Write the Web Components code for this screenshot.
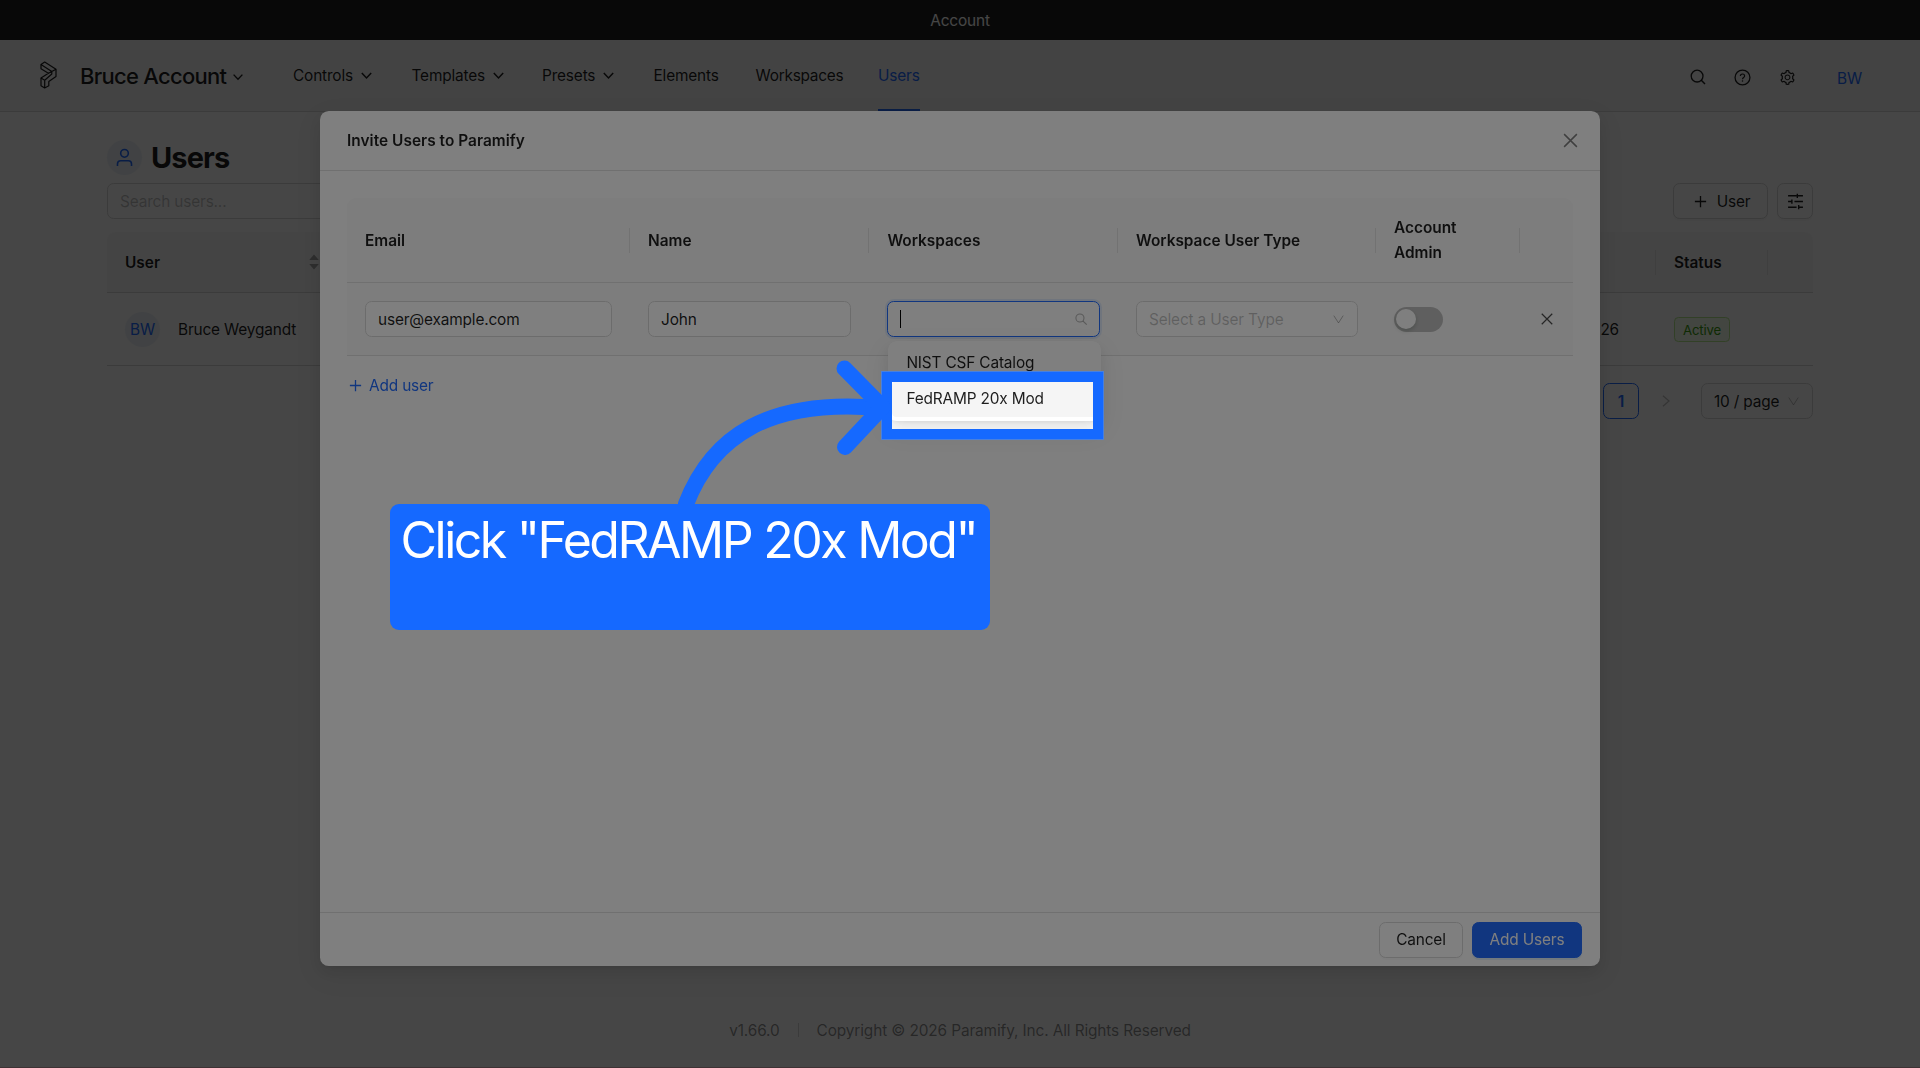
<!DOCTYPE html>
<html lang="en">
<head>
<meta charset="utf-8">
<title>Users</title>
<style>
    html, body {
        margin: 0;
        height: 100%;
        overflow: hidden;
    }
    body {
        font-family: Inter, "Liberation Sans", sans-serif;
        font-size: 15.4px;
        line-height: 25px;
        letter-spacing: -0.16px;
        color: rgba(0, 0, 0, 0.88);
        background: #fff;
        --primary: #226cff;
        --line: #d9d9d9;
        --soft-line: #e5e5e5;
    }
</style>
</head>
<body>
<account-app></account-app>

<script>
const ICONS = {
    down: '<path d="M3 5.3 8 10.6 13 5.3" fill="none" stroke="currentColor" stroke-width="1.6"/>',
    thinDown: '<path d="M2.2 3.2 8 12.2 13.8 3.2" fill="none" stroke="currentColor" stroke-width="1.2"/>',
    right: '<path d="M4.5 2 11.5 8 4.5 14" fill="none" stroke="currentColor" stroke-width="1.3"/>',
    close: '<path d="M2 2 14 14M14 2 2 14" fill="none" stroke="currentColor" stroke-width="1.4"/>',
    plus: '<path d="M8 2V14M2 8H14" fill="none" stroke="currentColor" stroke-width="1.4"/>',
    search: '<circle cx="7.1" cy="7.1" r="5.9" fill="none" stroke="currentColor" stroke-width="1.3"/><path d="M11.3 11.3 15 15" stroke="currentColor" stroke-width="1.5"/>',
    find: '<circle cx="6.6" cy="6.6" r="5.4" fill="none" stroke="currentColor" stroke-width="1.4"/><path d="M10.4 10.4 15.6 15.6" stroke="currentColor" stroke-width="1.6"/>',
    help: '<circle cx="8" cy="8" r="7" fill="none" stroke="currentColor" stroke-width="1.2"/><path d="M6 6.7C6 5.4 6.9 4.7 8 4.7s2 .7 2 1.8c0 1.5-2 1.5-2 3.1" fill="none" stroke="currentColor" stroke-width="1.1"/><circle cx="8" cy="11.3" r=".7" fill="currentColor"/>',
    user: '<circle cx="8" cy="4.1" r="3.6" fill="none" stroke="currentColor" stroke-width="1.5"/><path d="M1.4 16V14a3 3 0 0 1 3-3h7.2a3 3 0 0 1 3 3V16" fill="none" stroke="currentColor" stroke-width="1.5"/>',
    sliders: '<path d="M1 2.6H9M9.7 .6V4.6M9.7 2.6H15M1 8H4.6M4.6 6V10M7 8H15M1 13.4H9M11 11.4V15.4M11 13.4H15" fill="none" stroke="currentColor" stroke-width="1.3"/>',
    gear: '<path transform="scale(.015625)" fill="currentColor" d="M924.8 625.7l-65.5-56c3.1-19 4.7-38.4 4.7-57.8s-1.6-38.8-4.7-57.8l65.5-56a32.03 32.03 0 009.3-35.2l-.9-2.6a443.74 443.74 0 00-79.7-137.9l-1.8-2.1a32.12 32.12 0 00-35.1-9.5l-81.3 28.9c-30-24.6-63.5-44-99.7-57.6l-15.7-85a32.05 32.05 0 00-25.8-25.7l-2.7-.5c-52.1-9.4-106.9-9.4-159 0l-2.7.5a32.05 32.05 0 00-25.8 25.7l-15.8 85.4a351.86 351.86 0 00-99 57.4l-81.9-29.1a32 32 0 00-35.1 9.5l-1.8 2.1a446.02 446.02 0 00-79.7 137.9l-.9 2.6c-4.5 12.5-.8 26.5 9.3 35.2l66.3 56.6c-3.1 18.8-4.6 38-4.6 57.1 0 19.2 1.5 38.4 4.6 57.1L99 625.5a32.03 32.03 0 00-9.3 35.2l.9 2.6c18.1 50.4 44.9 96.9 79.7 137.9l1.8 2.1a32.12 32.12 0 0035.1 9.5l81.9-29.1c29.8 24.5 63.1 43.9 99 57.4l15.8 85.4a32.05 32.05 0 0025.8 25.7l2.7.5a449.4 449.4 0 00159 0l2.7-.5a32.05 32.05 0 0025.8-25.7l15.7-85a350 350 0 0099.7-57.6l81.3 28.9a32 32 0 0035.1-9.5l1.8-2.1c34.8-41.1 61.6-87.5 79.7-137.9l.9-2.6c4.5-12.3.8-26.3-9.3-35zM788.3 465.9c2.5 15.1 3.8 30.6 3.8 46.1s-1.3 31-3.8 46.1l-6.6 40.1 74.7 63.9a370.03 370.03 0 01-42.6 73.6L721 702.8l-31.4 25.8c-23.9 19.6-50.5 35-79.3 45.8l-38.1 14.3-17.9 97a377.5 377.5 0 01-85 0l-17.9-97.2-37.8-14.5c-28.5-10.8-55-26.2-78.7-45.7l-31.4-25.9-93.4 33.2c-17-22.9-31.2-47.6-42.6-73.6l75.5-64.5-6.5-40c-2.4-14.9-3.7-30.3-3.7-45.5 0-15.3 1.2-30.6 3.7-45.5l6.5-40-75.5-64.5c11.3-26.1 25.6-50.7 42.6-73.6l93.4 33.2 31.4-25.9c23.7-19.5 50.2-34.9 78.7-45.7l37.9-14.3 17.9-97.2c28.1-3.2 56.8-3.2 85 0l17.9 97 38.1 14.3c28.7 10.8 55.4 26.2 79.3 45.8l31.4 25.8 92.8-32.9c17 22.9 31.2 47.6 42.6 73.6L781.8 426l6.5 39.9zM512 326c-97.2 0-176 78.8-176 176s78.8 176 176 176 176-78.8 176-176-78.8-176-176-176zm79.2 255.2A111.6 111.6 0 01512 614c-29.9 0-58-11.7-79.2-32.8A111.6 111.6 0 01400 502c0-29.9 11.7-58 32.8-79.2C454 401.6 482.1 390 512 390c29.9 0 58 11.6 79.2 32.8A111.6 111.6 0 01624 502c0 29.9-11.7 58-32.8 79.2z"/>'
};

// Shared base: renders the static template of the class into an open shadow root
class BaseElement extends HTMLElement {
    constructor() {
        super();
        this.attachShadow({ mode: 'open' });
        this.shadowRoot.innerHTML = this.constructor.template;
    }
}

class UiIcon extends HTMLElement {
    constructor() {
        super();
        this.attachShadow({ mode: 'open' });
    }

    connectedCallback() {
        const size = this.getAttribute('size') || 16;
        this.shadowRoot.innerHTML = `
            <style>
                :host { display: inline-flex; flex: none; }
                svg { display: block; overflow: visible; }
            </style>
            <svg width="${size}" height="${size}" viewBox="0 0 16 16">${ICONS[this.getAttribute('name')]}</svg>
        `;
    }
}
customElements.define('ui-icon', UiIcon);

class UiButton extends BaseElement {
    static template = `
        <style>
            :host {
                display: inline-flex;
                align-items: center;
                justify-content: center;
                box-sizing: border-box;
                height: 36px;
                border: 1px solid var(--line);
                border-radius: 6.6px;
                background: #fff;
                box-shadow: 0 2px 0 rgba(0, 0, 0, 0.02);
                white-space: nowrap;
            }
            :host([primary]) {
                background: var(--primary);
                border-color: var(--primary);
                color: #fff;
                box-shadow: 0 2px 0 rgba(5, 145, 255, 0.1);
            }
        </style>
        <slot></slot>
    `;
}
customElements.define('ui-button', UiButton);

class UiAvatar extends BaseElement {
    static template = `
        <style>
            :host {
                display: inline-flex;
                align-items: center;
                justify-content: center;
                flex: none;
                width: 35px;
                height: 35px;
                border-radius: 50%;
                background: #eef3fa;
                color: var(--primary);
            }
            :host([plain]) { background: none; }
        </style>
        <slot></slot>
    `;
}
customElements.define('ui-avatar', UiAvatar);

class UiField extends BaseElement {
    static template = `
        <style>
            :host {
                position: relative;
                display: flex;
                align-items: center;
                justify-content: space-between;
                box-sizing: border-box;
                height: 36px;
                padding: 0 12px;
                border: 1px solid var(--line);
                border-radius: 6.6px;
                background: #fff;
                white-space: nowrap;
            }
            :host([placeholder]) { color: rgba(0, 0, 0, 0.25); }
            :host([focused]) {
                border-color: var(--primary);
                box-shadow: 0 0 0 2px rgba(5, 105, 255, 0.1);
            }
        </style>
        <slot></slot>
    `;
}
customElements.define('ui-field', UiField);

class TopBar extends BaseElement {
    static template = `
        <style>
            :host {
                display: flex;
                flex: none;
                align-items: center;
                justify-content: center;
                height: 40px;
                background: #1e1e1e;
                color: #fff;
            }
        </style>
        <slot></slot>
    `;
}
customElements.define('top-bar', TopBar);

class NavItem extends BaseElement {
    static template = `
        <style>
            :host {
                display: flex;
                align-items: center;
                box-sizing: border-box;
                height: 71px;
                padding-top: 2px;
                gap: 6px;
                border-bottom: 2px solid transparent;
            }
            :host([active]) {
                color: var(--primary);
                border-color: var(--primary);
            }
        </style>
        <slot></slot>
    `;
}
customElements.define('nav-item', NavItem);

class NavBar extends BaseElement {
    static template = `
        <style>
            :host {
                display: flex;
                flex: none;
                align-items: flex-start;
                box-sizing: border-box;
                height: 72px;
                padding: 0 53px 0 40px;
                background: #f5f5f5;
                border-bottom: 1px solid var(--line);
            }
            .logo { margin: 21px 23px 0 0; }
            .account {
                display: flex;
                align-items: center;
                width: 213px;
                height: 71px;
                padding-top: 1px;
                gap: 5px;
                font-size: 22px;
                font-weight: 500;
                letter-spacing: -0.72px;
            }
            .items { display: flex; flex: 1; }
            .c1 { width: 118.5px; }
            .c2 { width: 130.5px; }
            .c3 { width: 111.5px; }
            .c4 { width: 102px; }
            .c5 { width: 122.5px; letter-spacing: -0.24px; }
            .tools {
                display: flex;
                align-items: center;
                height: 74px;
                gap: 28px;
            }
            ui-avatar { margin-left: 8px; padding-top: 2px; }
        </style>
        <svg class="logo" width="17" height="28" viewBox="0 0 17 28" fill="none" stroke="currentColor" stroke-width="1.2" stroke-linejoin="round">
            <path d="M1 3.6 4.7 1 16 8.2V15.6L8.8 20.6V24.8L4.7 27 1 24.8V17L8.4 12.2 1 7.8Z"/>
            <path d="M1 3.6 11.8 10.6V13L4.7 19.2V27M1 17 4.7 19.2M11.8 10.6 16 8.2M8.4 12.2 11.8 10.6"/>
        </svg>
        <div class="account"><span>Bruce Account</span><ui-icon name="down" size="14"></ui-icon></div>
        <div class="items">
            <div class="c1"><nav-item>Controls <ui-icon name="down" size="15"></ui-icon></nav-item></div>
            <div class="c2"><nav-item>Templates <ui-icon name="down" size="15"></ui-icon></nav-item></div>
            <div class="c3"><nav-item>Presets <ui-icon name="down" size="15"></ui-icon></nav-item></div>
            <div class="c4"><nav-item>Elements</nav-item></div>
            <div class="c5"><nav-item>Workspaces</nav-item></div>
            <nav-item active>Users</nav-item>
        </div>
        <div class="tools">
            <ui-icon name="search"></ui-icon>
            <ui-icon name="help" size="17"></ui-icon>
            <ui-icon name="gear" size="17"></ui-icon>
            <ui-avatar plain>BW</ui-avatar>
        </div>
    `;
}
customElements.define('nav-bar', NavBar);

class UsersPage extends BaseElement {
    static template = `
        <style>
            :host {
                display: block;
                flex: 1;
                padding: 28px 107px 0;
            }
            .heading {
                display: flex;
                align-items: center;
                height: 35px;
                gap: 9px;
                margin-bottom: 8px;
            }
            h1 {
                margin: 0;
                font-size: 29px;
                font-weight: 650;
                line-height: 36px;
                letter-spacing: -0.9px;
            }
            .toolbar { display: flex; gap: 9px; margin-bottom: 13px; }
            .toolbar ui-field { width: 400px; margin-right: auto; }
            .add { width: 95px; gap: 9px; padding-left: 2px; }
            .filter { width: 36px; }
            .row {
                display: grid;
                grid-template-columns: 230px 1fr 113px 45px;
                align-items: center;
                border-bottom: 1px solid var(--line);
            }
            .head {
                height: 60px;
                background: #fafafa;
                border-radius: 9px 9px 0 0;
                font-weight: 600;
                letter-spacing: 0;
            }
            .body { height: 72px; }
            .user { padding-left: 18px; display: flex; align-items: center; justify-content: space-between; }
            .head .status { box-sizing: border-box; padding-left: 18px; border: solid var(--soft-line); border-width: 0 1px; }
            .status { padding-left: 19px; }
            .body .user { justify-content: flex-start; gap: 18px; }
            .sort { margin-right: 18px; }
            .date { text-align: right; padding-right: 36px; }
            .tag {
                display: inline-block;
                box-sizing: border-box;
                height: 25px;
                padding: 0 8px;
                border: 1px solid #b7eb8f;
                border-radius: 4.4px;
                background: #f6ffed;
                color: #389e0d;
                font-size: 13.2px;
                line-height: 24px;
            }
            .pager { display: flex; align-items: center; justify-content: flex-end; margin-top: 17px; }
            .current {
                display: flex;
                align-items: center;
                justify-content: center;
                box-sizing: border-box;
                width: 36px;
                height: 36px;
                border: 1px solid var(--primary);
                border-radius: 6.6px;
                color: var(--primary);
                font-weight: 600;
            }
            .next { margin: 0 28px 0 20px; color: rgba(0, 0, 0, 0.25); }
            .size { width: 112px; }
            .size ui-icon { color: rgba(0, 0, 0, 0.25); }
        </style>
        <div class="heading"><ui-avatar><ui-icon name="user" size="17"></ui-icon></ui-avatar><h1>Users</h1></div>
        <div class="toolbar">
            <ui-field placeholder>Search users...</ui-field>
            <ui-button class="add"><ui-icon name="plus" size="15"></ui-icon>User</ui-button>
            <ui-button class="filter"><ui-icon name="sliders" size="17"></ui-icon></ui-button>
        </div>
        <div class="row head">
            <div class="user">User
                <svg class="sort" width="10" height="16" viewBox="0 0 10 16" fill="#a6a6a6"><path d="M5 .5 9.8 6H.2ZM5 15.5 9.8 10H.2Z"/></svg>
            </div>
            <div></div>
            <div class="status">Status</div>
            <div></div>
        </div>
        <div class="row body">
            <div class="user"><ui-avatar>BW</ui-avatar><span>Bruce Weygandt</span></div>
            <div class="date">26</div>
            <div class="status"><span class="tag">Active</span></div>
            <div></div>
        </div>
        <div class="pager">
            <div class="current">1</div>
            <ui-icon class="next" name="right" size="14"></ui-icon>
            <ui-field class="size">10 / page <ui-icon name="thinDown" size="13"></ui-icon></ui-field>
        </div>
    `;
}
customElements.define('users-page', UsersPage);

class PageFooter extends BaseElement {
    static template = `
        <style>
            :host {
                display: flex;
                flex: none;
                align-items: center;
                justify-content: center;
                box-sizing: border-box;
                height: 50px;
                padding-bottom: 25px;
                border-bottom: 1px solid #e4b8c0;
                color: rgba(0, 0, 0, 0.45);
                letter-spacing: -0.12px;
            }
            i { width: 1px; height: 14px; margin: 0 18px; background: var(--line); }
        </style>
        <span>v1.66.0</span><i></i><span>Copyright © 2026 Paramify, Inc. All Rights Reserved</span>
    `;
}
customElements.define('page-footer', PageFooter);

class UiSwitch extends BaseElement {
    static template = `
        <style>
            :host {
                display: block;
                box-sizing: border-box;
                width: 49px;
                height: 25px;
                padding: 2px;
                border-radius: 13px;
                background: #bfbfbf;
            }
            div {
                width: 20.5px;
                height: 20.5px;
                border-radius: 50%;
                background: #fff;
                box-shadow: 0 2px 4px rgba(0, 35, 11, 0.2);
            }
        </style>
        <div></div>
    `;
}
customElements.define('ui-switch', UiSwitch);

class SelectMenu extends BaseElement {
    static template = `
        <style>
            :host {
                position: absolute;
                top: 39px;
                left: 0;
                z-index: 1;
                box-sizing: border-box;
                width: 213px;
                padding: 4px;
                border-radius: 8.8px;
                background: #fff;
                box-shadow: 0 6px 16px 0 rgba(0, 0, 0, 0.08), 0 3px 6px -4px rgba(0, 0, 0, 0.12), 0 9px 28px 8px rgba(0, 0, 0, 0.05);
            }
            ::slotted(div) {
                height: 36px;
                padding: 0 14px;
                border-radius: 4.4px;
                line-height: 36px;
            }
            ::slotted(.active) { background: #f5f5f5; }
        </style>
        <slot></slot>
    `;
}
customElements.define('select-menu', SelectMenu);

class InviteTable extends BaseElement {
    static template = `
        <style>
            :host { display: block; }
            .row {
                display: grid;
                grid-template-columns: 283px 239.4px 248.6px 258px 144px 1fr;
                align-items: center;
                background: #fafafa;
                border-bottom: 1px solid #e0e0e0;
            }
            .head { height: 84px; border-radius: 9px 9px 0 0; font-weight: 600; letter-spacing: 0; }
            .head div { display: flex; align-items: center; height: 25px; padding-left: 18px; border-right: 1px solid var(--soft-line); }
            .head div:last-child { border: 0; }
            .body { height: 72px; }
            .cell { padding: 0 18px; }
            .caret { width: 1px; height: 18px; background: #000; }
            ui-field ui-icon { color: rgba(0, 0, 0, 0.3); }
            .remove { display: flex; padding-left: 20px; color: rgba(0, 0, 0, 0.7); }
        </style>
        <div class="row head">
            <div>Email</div>
            <div>Name</div>
            <div>Workspaces</div>
            <div>Workspace User Type</div>
            <div>Account<br>Admin</div>
            <div></div>
        </div>
        <div class="row body">
            <div class="cell"><ui-field>user@example.com</ui-field></div>
            <div class="cell"><ui-field>John</ui-field></div>
            <div class="cell">
                <ui-field focused>
                    <span class="caret"></span>
                    <ui-icon name="find" size="12"></ui-icon>
                    <select-menu>
                        <div>NIST CSF Catalog</div>
                        <div class="active">FedRAMP 20x Mod</div>
                    </select-menu>
                </ui-field>
            </div>
            <div class="cell"><ui-field placeholder>Select a User Type <ui-icon name="thinDown" size="13"></ui-icon></ui-field></div>
            <div class="cell"><ui-switch></ui-switch></div>
            <div class="remove"><ui-icon name="close" size="14"></ui-icon></div>
        </div>
    `;
}
customElements.define('invite-table', InviteTable);

class InviteModal extends BaseElement {
    static template = `
        <style>
            :host {
                position: fixed;
                inset: 0;
                display: flex;
                justify-content: center;
                align-items: flex-start;
                padding-top: 111px;
                background: rgba(0, 0, 0, 0.45);
            }
            .dialog {
                display: flex;
                flex-direction: column;
                width: 1280px;
                height: 855px;
                border-radius: 8.8px;
                background: #fff;
                box-shadow: 0 6px 16px 0 rgba(0, 0, 0, 0.08), 0 3px 6px -4px rgba(0, 0, 0, 0.12), 0 9px 28px 8px rgba(0, 0, 0, 0.05);
            }
            header {
                display: flex;
                align-items: center;
                justify-content: space-between;
                height: 59px;
                padding: 0 21px 0 27px;
                border-bottom: 1px solid #e0e0e0;
                font-weight: 600;
                letter-spacing: 0.04px;
            }
            header ui-icon { color: rgba(0, 0, 0, 0.5); }
            main { flex: 1; padding: 27px 27px 0; }
            .add {
                display: flex;
                align-items: center;
                gap: 6px;
                margin: 17px 0 0 1px;
                color: var(--primary);
            }
            footer {
                display: flex;
                align-items: center;
                justify-content: flex-end;
                height: 53px;
                padding-right: 18px;
                gap: 9px;
                border-top: 1px solid #e0e0e0;
            }
            .cancel { width: 84px; }
            .ok { width: 110px; }
        </style>
        <section class="dialog">
            <header><span>Invite Users to Paramify</span><ui-icon name="close" size="17"></ui-icon></header>
            <main>
                <invite-table></invite-table>
                <div class="add"><ui-icon name="plus" size="15"></ui-icon>Add user</div>
            </main>
            <footer>
                <ui-button class="cancel">Cancel</ui-button>
                <ui-button class="ok" primary>Add Users</ui-button>
            </footer>
        </section>
    `;
}
customElements.define('invite-modal', InviteModal);

// Walkthrough layer: dims everything but the highlighted option
class GuideStep extends BaseElement {
    static template = `
        <style>
            :host {
                position: fixed;
                inset: 0;
                overflow: hidden;
                --guide: #1569ff;
            }
            .target {
                position: absolute;
                left: 882px;
                top: 372px;
                width: 201px;
                height: 47px;
                border: 10px solid var(--guide);
                box-shadow: 0 0 0 1px #4a80dc, 0 0 0 2000px rgba(0, 0, 0, 0.5);
            }
            svg { position: absolute; inset: 0; }
            .label {
                position: absolute;
                left: 390px;
                top: 504px;
                box-sizing: border-box;
                width: 599.5px;
                height: 126px;
                padding: 6px 11px;
                border-radius: 9px;
                background: var(--guide);
                color: #fff;
                font-size: 50px;
                line-height: 60px;
                letter-spacing: -2.5px;
                word-spacing: 0.5px;
                text-indent: -0.5px;
                white-space: nowrap;
            }
        </style>
        <div class="target"></div>
        <svg width="1920" height="1068" fill="none" stroke="#1569ff" stroke-width="16" stroke-linecap="round" stroke-linejoin="round">
            <path d="M686 504C712 437 768 398 881 408"/>
            <path d="M844.5 368.5 882.5 407 845 447"/>
        </svg>
        <div class="label"><slot></slot></div>
    `;
}
customElements.define('guide-step', GuideStep);

class AccountApp extends BaseElement {
    static template = `
        <style>
            :host {
                display: flex;
                flex-direction: column;
                height: 100vh;
            }
        </style>
        <top-bar>Account</top-bar>
        <nav-bar></nav-bar>
        <users-page></users-page>
        <page-footer></page-footer>
        <invite-modal></invite-modal>
        <guide-step>Click "FedRAMP 20x Mod"</guide-step>
    `;
}
customElements.define('account-app', AccountApp);
</script>
</body>
</html>
